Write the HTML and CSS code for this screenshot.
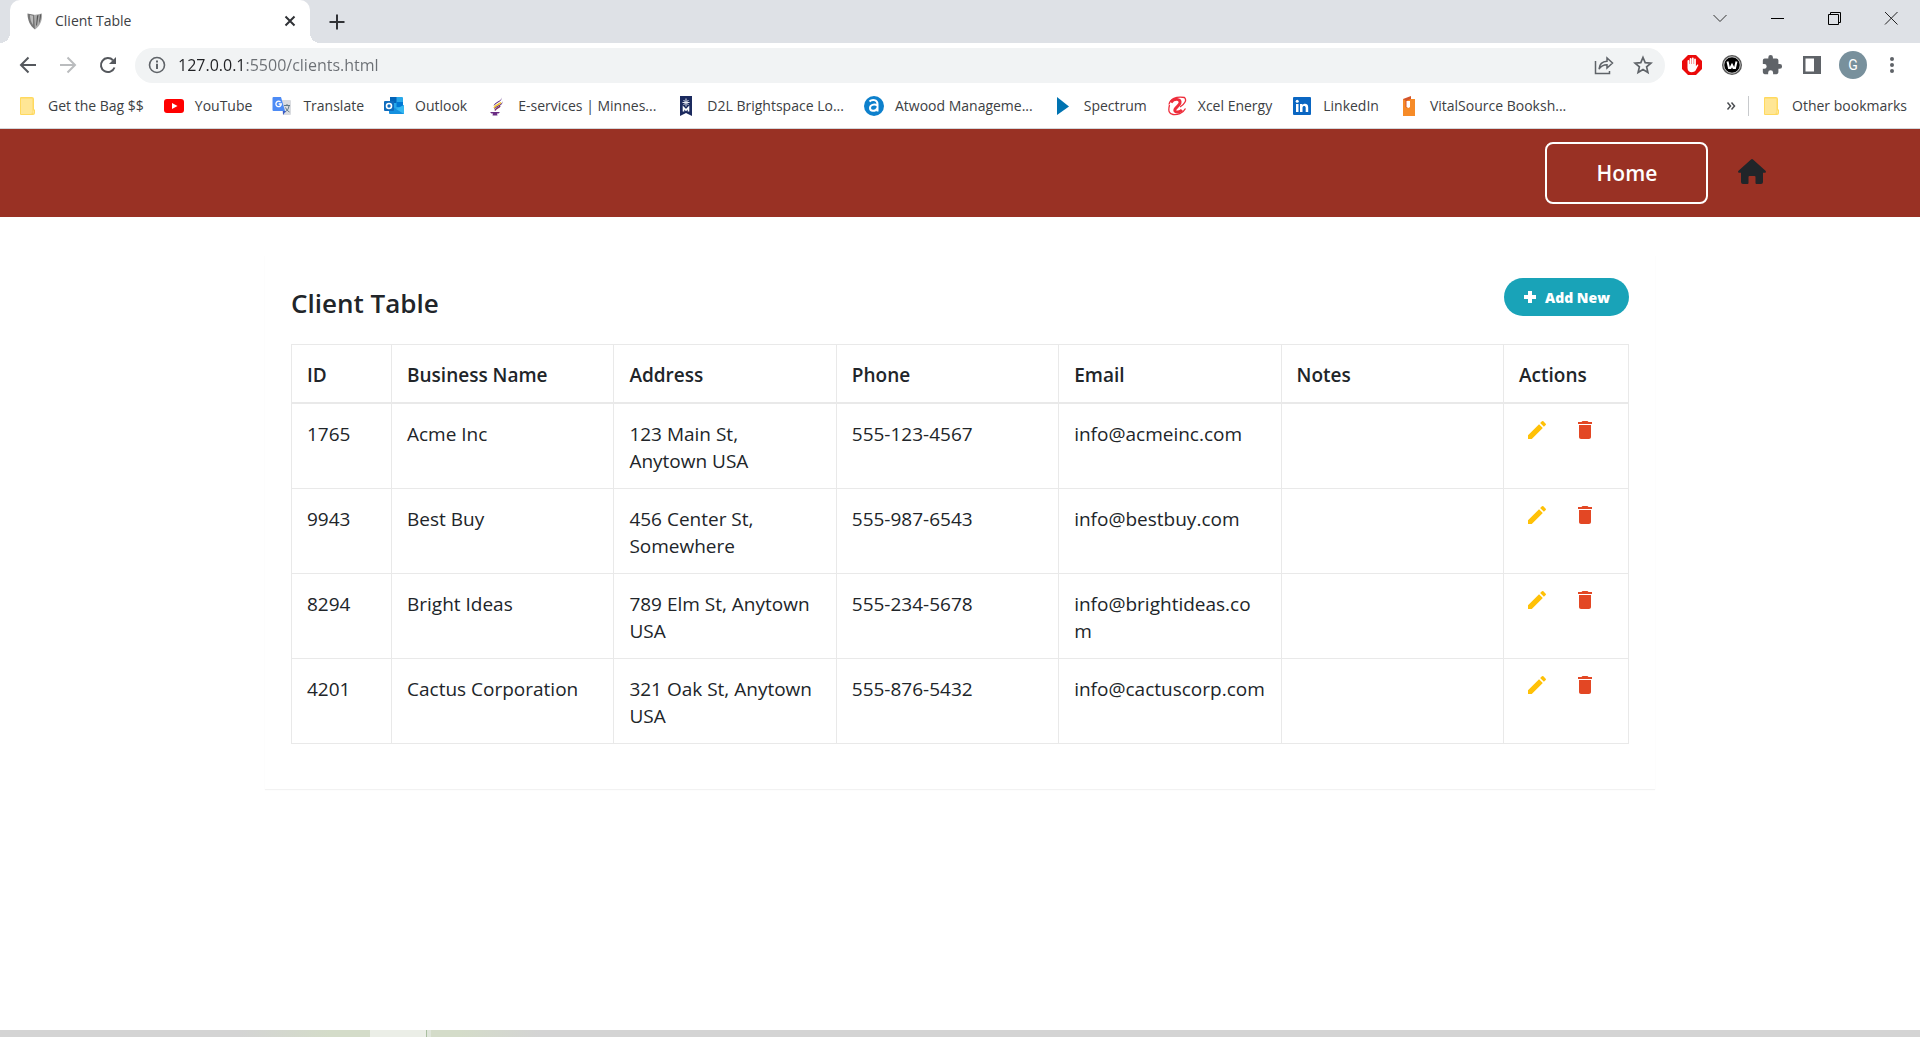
FILE: index.html
```html
<!DOCTYPE html>
<html lang="en">
<head>
<meta charset="utf-8">
<meta name="viewport" content="width=device-width, initial-scale=1">
<title>Client Table</title>
<link rel="stylesheet" href="styles.css">
</head>
<body>
<svg class="sprite" aria-hidden="true">
  <symbol id="pencil" viewBox="0 0 24 24"><path d="M3 17.25V21h3.75L17.81 9.94l-3.75-3.75L3 17.25zM20.71 7.04a1 1 0 0 0 0-1.41l-2.34-2.34a1 1 0 0 0-1.41 0l-1.83 1.83 3.75 3.75 1.83-1.83z"/></symbol>
  <symbol id="trash" viewBox="0 0 24 24"><path d="M6 19c0 1.1.9 2 2 2h8c1.1 0 2-.9 2-2V7H6v12zM19 4h-3.5l-1-1h-5l-1 1H5v2h14V4z"/></symbol>
  <symbol id="folder" viewBox="0 0 20 20"><path d="M4 1h11a2 2 0 0 1 2 2v10.500h1V17a2 2 0 0 1-2 2H4a1 1 0 0 1-1-1V2a1 1 0 0 1 1-1z" fill="#ffd95e"/><path d="M4 2.500h11.500V14l-1 4H4z" fill="#ffe695"/><path d="M15.500 14.500h1.500v3h-1.500z" fill="#ffe695"/></symbol>
</svg>

<header class="browser">
  <div class="tabstrip">
    <div class="tab">
      <svg width="20" height="20" viewBox="0 0 20 20"><path d="M2.500 2.500 10 4v14.500C5 15 2.500 9 2.500 2.500z" fill="#777"/><path d="M5 4l3 .8V14C6 11 5 8 5 4z" fill="#bbb"/><path d="M9 4l8-1.500c.5 7-2 12.500-7 16z" fill="#aaa"/><path d="M12 4.500l1.500-.5-1.500 10-1 1zM15 3.500l1-.3c0 4-.7 7-2 9z" fill="#555"/></svg>
      <span class="tab-title">Client Table</span>
      <button class="plain" aria-label="Close tab"><svg width="20" height="20" viewBox="0 0 20 20"><path d="M5.500 5.500l9 9m0-9l-9 9" stroke="#303236" stroke-width="2"/></svg></button>
    </div>
    <button class="plain new-tab" aria-label="New tab"><svg width="20" height="20" viewBox="0 0 20 20"><path d="M10 2.500v15M2.500 10h15" stroke="#303236" stroke-width="2"/></svg></button>
    <div class="window-controls">
      <button class="plain" aria-label="Search tabs"><svg width="20" height="20" viewBox="0 0 20 20"><path d="M3.500 7l6.500 6.500L16.500 7" stroke="#333" fill="none"/></svg></button>
      <button class="plain" aria-label="Minimize"><svg width="20" height="20" viewBox="0 0 20 20"><path d="M4 10.500h13" stroke="#000"/></svg></button>
      <button class="plain" aria-label="Restore"><svg width="20" height="20" viewBox="0 0 20 20"><path d="M4.500 6.500h10v10h-10zM6.500 6V4.500h10v10H15" stroke="#000" fill="none"/></svg></button>
      <button class="plain" aria-label="Close"><svg width="20" height="20" viewBox="0 0 20 20"><path d="M4 4l12.500 12.500m0-12.500L4 16.500" stroke="#222" fill="none"/></svg></button>
    </div>
  </div>

  <div class="toolbar">
    <div class="nav-buttons">
      <button class="plain" aria-label="Back"><svg width="20" height="20" viewBox="0 0 20 20"><path d="M18 10H3m7.500-7.500L3 10l7.500 7.500" stroke="#55585d" stroke-width="2" fill="none"/></svg></button>
      <button class="plain" aria-label="Forward"><svg width="20" height="20" viewBox="0 0 20 20"><path d="M2 10h15M9.500 2.500L17 10l-7.500 7.500" stroke="#babcbe" stroke-width="2" fill="none"/></svg></button>
      <button class="plain" aria-label="Reload"><svg width="20" height="20" viewBox="0 0 20 20"><path d="M16.500 12.500A7 7 0 1 1 15 5.200" stroke="#55585d" stroke-width="2" fill="none"/><path d="M18 2v7h-7z" fill="#55585d"/></svg></button>
    </div>
    <div class="omnibox">
      <svg width="20" height="20" viewBox="0 0 20 20"><circle cx="10" cy="10" r="7.500" stroke="#5f6368" stroke-width="1.600" fill="none"/><path d="M10 8.800v5.200M10 5.500v2" stroke="#5f6368" stroke-width="2"/></svg>
      <input class="url" type="text" aria-label="Address" value="127.0.0.1:5500/clients.html">
      <button class="plain" aria-label="Share"><svg width="20" height="20" viewBox="0 0 20 20"><path d="M1.500 6v12.500h14V16" stroke="#5f6368" stroke-width="1.500" fill="none"/><path d="M5 14c.5-5 3.500-7.500 8-7.700V3l5.500 5-5.500 5v-3.200C9.500 9.800 7 11 5 14z" stroke="#5f6368" stroke-width="1.500" fill="none"/></svg></button>
      <button class="plain" aria-label="Bookmark this page"><svg width="20" height="20" viewBox="0 0 20 20"><path d="M10 2.500l2.200 5.200 5.700.5-4.300 3.700 1.300 5.500-4.900-2.900-4.900 2.900 1.300-5.500L2.100 8.200l5.700-.5z" stroke="#5f6368" stroke-width="1.700" fill="none"/></svg></button>
    </div>
    <div class="extensions">
      <button class="plain" aria-label="Ad blocker"><svg width="22" height="22" viewBox="0 0 22 22"><path d="M7 1h8l6 6v8l-6 6H7l-6-6V7z" fill="#eb0a0a"/><path d="M6.500 11V7a.9.9 0 0 1 1.800 0v3h.4V5a.9.9 0 0 1 1.800 0v5h.4V4.500a.9.9 0 0 1 1.800 0V10h.4V5.500a.9.9 0 0 1 1.800 0v6.700l1-1.200c.8-.8 1.700-.2 1.300.6l-2.600 5c-2 2.500-8.100 2.500-8.100-2.600z" fill="#fff"/></svg></button>
      <button class="plain" aria-label="W extension"><svg width="22" height="22" viewBox="0 0 22 22"><circle cx="11" cy="11" r="10" fill="#555"/><circle cx="11" cy="11" r="8.200" fill="#000" stroke="#ccc"/><path d="M6.500 7.500l1.500 6.500h1.500L11 11l1.500 3H14l1.500-6.500" stroke="#fff" stroke-width="2" fill="none"/></svg></button>
      <button class="plain" aria-label="Extensions"><svg width="22" height="22" viewBox="0 0 24 24"><path d="M20.500 11H19V7a2 2 0 0 0-2-2h-4V3.500a2.500 2.500 0 0 0-5 0V5H4a2 2 0 0 0-2 2v3.800h1.500a2.700 2.700 0 0 1 0 5.400H2V20a2 2 0 0 0 2 2h3.800v-1.500a2.700 2.700 0 0 1 5.400 0V22H17a2 2 0 0 0 2-2v-4h1.500a2.500 2.500 0 0 0 0-5z" fill="#5f6368"/></svg></button>
      <button class="plain" aria-label="Side panel"><svg width="22" height="22" viewBox="0 0 22 22"><path d="M2 2h18v18H2zM4.500 4.500v13H13v-13z" fill="#5f6368" fill-rule="evenodd"/></svg></button>
    </div>
    <button class="avatar" aria-label="Profile">G</button>
    <button class="plain" aria-label="Menu"><svg width="20" height="20" viewBox="0 0 20 20" fill="#5f6368"><circle cx="10" cy="4" r="2"/><circle cx="10" cy="10" r="2"/><circle cx="10" cy="16" r="2"/></svg></button>
  </div>

  <nav class="bookmarks" aria-label="Bookmarks">
    <a href="#"><svg width="20" height="20"><use href="#folder"/></svg>Get the Bag $$</a>
    <a href="#"><svg width="20" height="20" viewBox="0 0 20 20"><rect y="3" width="20" height="14" rx="3" fill="#f00"/><path d="M8 7l5.500 3L8 13z" fill="#fff"/></svg>YouTube</a>
    <a href="#"><svg width="20" height="20" viewBox="0 0 20 20"><path d="M7 4h11a1 1 0 0 1 1 1v13a1 1 0 0 1-1 1h-7z" fill="#dadce0"/><path d="M12 9.500h6M15 8v1.500M17 10c-.5 3-2 5-4 6M13.500 11.500c1 2 2 3.500 4 4.500" stroke="#607988" fill="none"/><path d="M11 15l3 0-3 4z" fill="#3a5bc7"/><path d="M1.500 1H9l4 14H1.500A1 1 0 0 1 .5 14V2a1 1 0 0 1 1-1z" fill="#4c8bf5"/><path d="M8.500 6a2.700 2.700 0 1 0 .8 2H6.700" stroke="#fff" stroke-width="1.300" fill="none"/></svg>Translate</a>
    <a href="#"><svg width="20" height="20" viewBox="0 0 20 20"><rect x="6" y="1" width="13" height="12" rx="1" fill="#28a8ea"/><path d="M6 1h6.500v6H6z" fill="#0364b8"/><path d="M12.500 6H19v5h-6.500z" fill="#0078d4"/><path d="M5 9l7.500 4L20 9v9H6a1 1 0 0 1-1-1z" fill="#1490df"/><path d="M12 13l8-4v9z" fill="#35b8f1"/><rect y="5" width="10" height="10" rx="1" fill="#0f6cbd"/><circle cx="5" cy="10" r="2.500" stroke="#fff" stroke-width="1.600" fill="none"/></svg>Outlook</a>
    <a href="#"><svg width="20" height="20" viewBox="0 0 20 20"><path d="M14.500 1c1 4-7 4.500-8 9 4-4 9-4.500 8-9z" fill="#5b2b82"/><path d="M15.500 5c0 4.500-8 4-8.500 8.500 4-4 9-3.500 8.500-8.500z" fill="#5b2b82"/><path d="M14 6.500c-1.500 2-6 2.500-7 5.500" stroke="#f3c22b" stroke-width="1.500" fill="none"/><path d="M13 10c-1 2-4 2-5 4.500" stroke="#7b2d5b" stroke-width="1.500" fill="none"/><path d="M3 16h10l-1.500 1.500H10l.5 2h-5l.5-2H4.500z" fill="#6a2c83"/></svg>E-services | Minnes...</a>
    <a href="#"><svg width="20" height="20" viewBox="0 0 20 20"><path d="M4 0h12v20l-6-3-6 3z" fill="#1b2a5e"/><path d="M10 2.500v8M6.500 6.500h7M7.500 4l5 5m0-5l-5 5" stroke="#e6e9f2"/><path d="M7.500 15.500v-4L10 14l2.500-2.500v4" stroke="#fff" stroke-width="1.600" fill="none"/></svg>D2L Brightspace Lo...</a>
    <a href="#"><svg width="20" height="20" viewBox="0 0 20 20"><circle cx="10" cy="10" r="10" fill="#0d80cc"/><path d="M5.500 5.500C8 3 13.500 3.500 13.500 8v7.500M13.500 9.500C10 7.500 6 9 6 12s5 4.500 7.500 0" stroke="#fff" stroke-width="2" fill="none"/></svg>Atwood Manageme...</a>
    <a href="#"><svg width="20" height="20" viewBox="0 0 20 20"><path d="M4 1l12 9.500L4 19z" fill="#0073b1"/></svg>Spectrum</a>
    <a href="#"><svg width="20" height="20" viewBox="0 0 20 20"><path d="M4 6.500C7 2 14 2.500 13 7c-.5 3-6.500 5-5 8 1 1.800 5 1 7-1" stroke="#ee2d3b" stroke-width="3" fill="none"/><path d="M2 8.500C3 3 9 0 17.500 1.500 20 4 18 8 13 11M2.500 9C1 15 2 18 6 18.500c4 .5 10-1 12.500-6" stroke="#ee2d3b" stroke-width="1.300" fill="none"/></svg>Xcel Energy</a>
    <a href="#"><svg width="20" height="20" viewBox="0 0 20 20"><rect x="1" y="1" width="18" height="18" rx="1" fill="#0a66c2"/><path d="M4 8h2.500v8H4zM8 8h2.500v1.200c1.500-2.200 5.700-1.800 5.700 2V16h-2.500v-4.300c0-2.500-3.200-2.300-3.200 0V16H8z" fill="#fff"/><circle cx="5.200" cy="5.200" r="1.500" fill="#fff"/></svg>LinkedIn</a>
    <a href="#"><svg width="20" height="20" viewBox="0 0 20 20"><path d="M4 3h12v17H4z" fill="#f68b28"/><path d="M4 3l8-3v3L8 4.500V12l-1.500-1V4.500z" fill="#d4552b"/><path d="M7.500 5H11v6l-1.500 1-2-1z" fill="#fff"/></svg>VitalSource Booksh...</a>
    <span class="spacer"></span>
    <button class="plain more" aria-label="More bookmarks"><svg width="10" height="10" viewBox="0 0 10 10"><path d="M1.500 1.500L4.500 5l-3 3.500M5.500 1.500L8.500 5l-3 3.500" stroke="#4a4d51" stroke-width="1.500" fill="none"/></svg></button>
    <a class="other" href="#"><svg width="20" height="20"><use href="#folder"/></svg>Other bookmarks</a>
  </nav>
</header>

<div class="site-header">
  <button class="home-button">Home</button>
  <a class="home-link" href="#" aria-label="Home"><svg width="28" height="28" viewBox="0 0 28 28"><path d="M13 .5a1.600 1.600 0 0 1 2 0l12.500 11.300c.8.800.4 2-.8 2H25V23a2 2 0 0 1-2 2h-4.500a1 1 0 0 1-1-1v-6a1 1 0 0 0-1-1h-5a1 1 0 0 0-1 1v6a1 1 0 0 1-1 1H5a2 2 0 0 1-2-2v-9.200H1.300c-1.200 0-1.600-1.200-.8-2z" fill="#212529"/></svg></a>
</div>

<main class="content">
  <section class="card">
    <div class="card-title">
      <h2>Client Table</h2>
      <button class="add-new"><svg width="14" height="14" viewBox="0 0 14 14"><path d="M7 1v12M1 7h12" stroke="#fff" stroke-width="4"/></svg>Add New</button>
    </div>
    <table>
      <thead>
        <tr><th class="col-id">ID</th><th>Business Name</th><th>Address</th><th>Phone</th><th>Email</th><th>Notes</th><th class="col-actions">Actions</th></tr>
      </thead>
      <tbody>
        <tr><td>1765</td><td>Acme Inc</td><td>123 Main St, Anytown USA</td><td>555-123-4567</td><td class="email">info@acmeinc.com</td><td></td>
          <td class="action-cell"><div class="actions"><button class="plain edit" aria-label="Edit"><svg width="24" height="24"><use href="#pencil"/></svg></button><button class="plain delete" aria-label="Delete"><svg width="24" height="24"><use href="#trash"/></svg></button></div></td></tr>
        <tr><td>9943</td><td>Best Buy</td><td>456 Center St, Somewhere</td><td>555-987-6543</td><td class="email">info@bestbuy.com</td><td></td>
          <td class="action-cell"><div class="actions"><button class="plain edit" aria-label="Edit"><svg width="24" height="24"><use href="#pencil"/></svg></button><button class="plain delete" aria-label="Delete"><svg width="24" height="24"><use href="#trash"/></svg></button></div></td></tr>
        <tr><td>8294</td><td>Bright Ideas</td><td>789 Elm St, Anytown USA</td><td>555-234-5678</td><td class="email">info@brightideas.com</td><td></td>
          <td class="action-cell"><div class="actions"><button class="plain edit" aria-label="Edit"><svg width="24" height="24"><use href="#pencil"/></svg></button><button class="plain delete" aria-label="Delete"><svg width="24" height="24"><use href="#trash"/></svg></button></div></td></tr>
        <tr><td>4201</td><td>Cactus Corporation</td><td>321 Oak St, Anytown USA</td><td>555-876-5432</td><td class="email">info@cactuscorp.com</td><td></td>
          <td class="action-cell"><div class="actions"><button class="plain edit" aria-label="Edit"><svg width="24" height="24"><use href="#pencil"/></svg></button><button class="plain delete" aria-label="Delete"><svg width="24" height="24"><use href="#trash"/></svg></button></div></td></tr>
      </tbody>
    </table>
  </section>
</main>

<footer class="taskbar"></footer>
</body>
</html>
```
FILE: styles.css
```css
* { box-sizing: border-box; }

body {
  margin: 0;
  min-height: 100vh;
  display: flex;
  flex-direction: column;
  background: #fff;
  color: #212529;
  font-family: "Open Sans", "Noto Sans", sans-serif;
  font-size: 19px;
  line-height: 27px;
}

svg { display: block; flex: none; }
.sprite { position: absolute; width: 0; height: 0; }

button { font-family: inherit; cursor: pointer; }
.plain {
  display: block;
  padding: 0;
  border: 0;
  background: none;
}

/* Browser window */
.tabstrip {
  display: flex;
  align-items: center;
  height: 43px;
  padding-left: 10px;
  background: #dee1e6;
}
.tab {
  position: relative;
  display: flex;
  align-items: center;
  gap: 10px;
  width: 300px;
  height: 43px;
  padding: 0 10px 2px 15px;
  border-radius: 10px 10px 0 0;
  background: #fff;
}
.tab::before,
.tab::after {
  content: "";
  position: absolute;
  bottom: 0;
  width: 10px;
  height: 10px;
}
.tab::before { left: -10px; background: radial-gradient(circle at 0 0, #dee1e6 10px, #fff 10px); }
.tab::after { right: -10px; background: radial-gradient(circle at 100% 0, #dee1e6 10px, #fff 10px); }
.tab-title { flex: 1; color: #3c4043; font-size: 14px; line-height: 20px; }
.new-tab { margin-left: 17px; }
.window-controls {
  display: flex;
  gap: 37px;
  margin-left: auto;
  padding: 0 19px 7px 0;
}

.toolbar {
  display: flex;
  align-items: center;
  height: 45px;
  padding: 0 18px 1px 0;
}
.nav-buttons { display: flex; gap: 20px; padding: 0 17px 0 18px; }
.omnibox {
  flex: 1;
  display: flex;
  align-items: center;
  gap: 11px;
  height: 35px;
  padding: 0 12px;
  border-radius: 18px;
  background: #f1f3f4;
}
.url {
  flex: 1;
  min-width: 0;
  padding: 0;
  border: 0;
  background: linear-gradient(90deg, #202124 67px, #6b6f74 67px);
  -webkit-background-clip: text;
  background-clip: text;
  color: transparent;
  font-family: inherit;
  font-size: 16px;
  line-height: 24px;
}
.omnibox .plain + .plain { margin-left: 8px; }
.extensions { display: flex; gap: 18px; padding: 0 16px; }
.avatar {
  width: 28px;
  height: 28px;
  margin-right: 15px;
  padding: 0;
  border: 0;
  border-radius: 50%;
  background: #78909c;
  color: #fff;
  font-family: Roboto, sans-serif;
  font-size: 14px;
}

.bookmarks {
  display: flex;
  align-items: center;
  gap: 20px;
  height: 41px;
  padding: 0 13px 4px 17px;
  border-bottom: 1px solid #d3d6da;
  font-size: 14px;
  line-height: 20px;
  white-space: nowrap;
}
.bookmarks a {
  display: flex;
  align-items: center;
  gap: 11px;
  color: #3c4043;
  text-decoration: none;
}
.spacer { flex: 1; }
.bookmarks .more { margin-right: -8px; }
.bookmarks .other { padding-left: 12px; border-left: 1px solid #c8cacd; }

/* Site */
.site-header {
  display: flex;
  align-items: center;
  justify-content: flex-end;
  gap: 30px;
  height: 88px;
  padding-right: 8%;
  background: #993124;
}
.home-button {
  width: 163px;
  height: 62px;
  border: 2px solid #fff;
  border-radius: 8px;
  background: none;
  color: #fff;
  font-size: 21px;
  font-weight: 600;
}

.content { flex: 1; padding: 38px 24px; }
.card {
  max-width: 1390px;
  margin: 0 auto;
  padding: 23px 26px 45px;
  background: #fff;
  box-shadow: 0 1px 1px rgba(0, 0, 0, .05);
}
.card-title {
  display: flex;
  align-items: flex-start;
  justify-content: space-between;
  padding-bottom: 23px;
}
h2 {
  margin: 7px 0 0;
  font-size: 26px;
  line-height: 36px;
  font-weight: 600;
}
.add-new {
  display: flex;
  align-items: center;
  justify-content: center;
  gap: 8px;
  width: 125px;
  height: 38px;
  padding: 0;
  border: 0;
  border-radius: 19px;
  background: #19a3b8;
  color: #fff;
  font-size: 14px;
  font-weight: 800;
}

table {
  width: 100%;
  border-collapse: collapse;
  table-layout: fixed;
}
th,
td {
  padding: 17px 16px 13px 15px;
  border: 1px solid #e9e9e9;
  text-align: left;
  vertical-align: top;
  overflow-wrap: anywhere;
}
th { border-bottom-width: 2px; font-weight: 600; }
.col-id { width: 100px; }
.col-actions { width: 125px; }
.email { padding-right: 14px; }
.action-cell { padding-top: 14px; }
.actions { display: flex; gap: 24px; padding-left: 6px; }
.edit { fill: #ffc107; }
.delete { fill: #e34724; }

.taskbar {
  height: 7px;
  background:
    linear-gradient(90deg, transparent 370px, #ebeee7 370px 426px, #a9bfa0 426px 427px, #dfe5da 427px 431px, transparent 431px),
    linear-gradient(90deg, #d4d4d4 240px, #d4dcc9 330px, #d4dcc9 460px, #d4d4d4 540px);
}
```
